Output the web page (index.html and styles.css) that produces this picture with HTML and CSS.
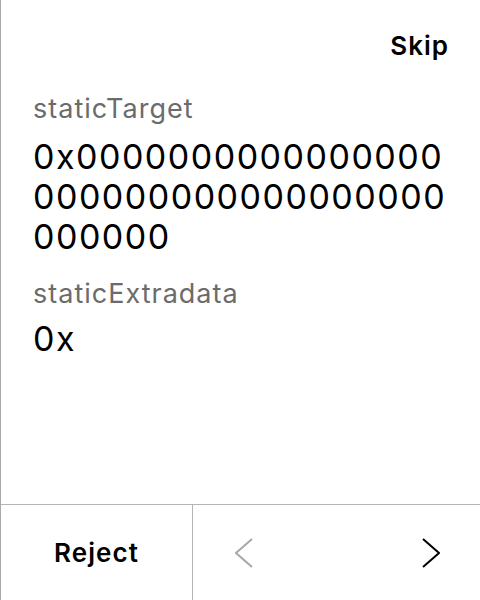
FILE: index.html
```html
<!DOCTYPE html>
<html>
<head>
<meta charset="utf-8">
<link rel="stylesheet" href="styles.css">
</head>
<body>
<div class="screen">
  <div class="top">
    <span class="skip">Skip</span>
  </div>
  <div class="content">
    <div class="field">
      <div class="label">staticTarget</div>
      <div class="value hex">0x0000000000000000000000000000000000000000</div>
    </div>
    <div class="field second">
      <div class="label">staticExtradata</div>
      <div class="value">0x</div>
    </div>
  </div>
  <div class="footer">
    <div class="reject">Reject</div>
    <div class="nav">
      <svg class="chev prev" width="18" height="30" viewBox="0 0 18 30"><polyline points="17,1 1,15 17,29" fill="none" stroke="#a8a8a8" stroke-width="2"/></svg>
      <svg class="chev next" width="18" height="30" viewBox="0 0 18 30"><polyline points="1,1 17,15 1,29" fill="none" stroke="#000" stroke-width="2"/></svg>
    </div>
  </div>
</div>
</body>
</html>
```
FILE: styles.css
```css
html, body {
  margin: 0;
  padding: 0;
  background: #fff;
}
.screen {
  width: 479px;
  height: 600px;
  border-left: 1px solid #a9a9a9;
  display: flex;
  flex-direction: column;
  font-family: Inter, "Liberation Sans", sans-serif;
  color: #000;
}
.top {
  display: flex;
  justify-content: flex-end;
  padding: 30px 31px 0 32px;
  height: 32px;
}
.skip {
  font-size: 26px;
  line-height: 32px;
  font-weight: 600;
  letter-spacing: 1px;
}
.content {
  flex: 1;
  padding: 31px 32px 0 32px;
}
.second {
  margin-top: 21px;
}
.label {
  font-size: 27px;
  line-height: 32px;
  letter-spacing: 1px;
  color: #6b6b6b;
}
.value {
  font-size: 34px;
  line-height: 40px;
  letter-spacing: 1.5px;
  margin-top: 12px;
  word-break: break-all;
}
.second .value {
  margin-top: 9px;
}
.footer {
  height: 95px;
  border-top: 1px solid #b4b4b4;
  display: flex;
}
.reject {
  width: 191px;
  border-right: 1px solid #b4b4b4;
  display: flex;
  align-items: center;
  justify-content: center;
  font-size: 26px;
  font-weight: 600;
  letter-spacing: 1.1px;
}
.nav {
  flex: 1;
  display: flex;
  align-items: center;
  justify-content: space-between;
  padding: 0 40px 0 42px;
}
```
